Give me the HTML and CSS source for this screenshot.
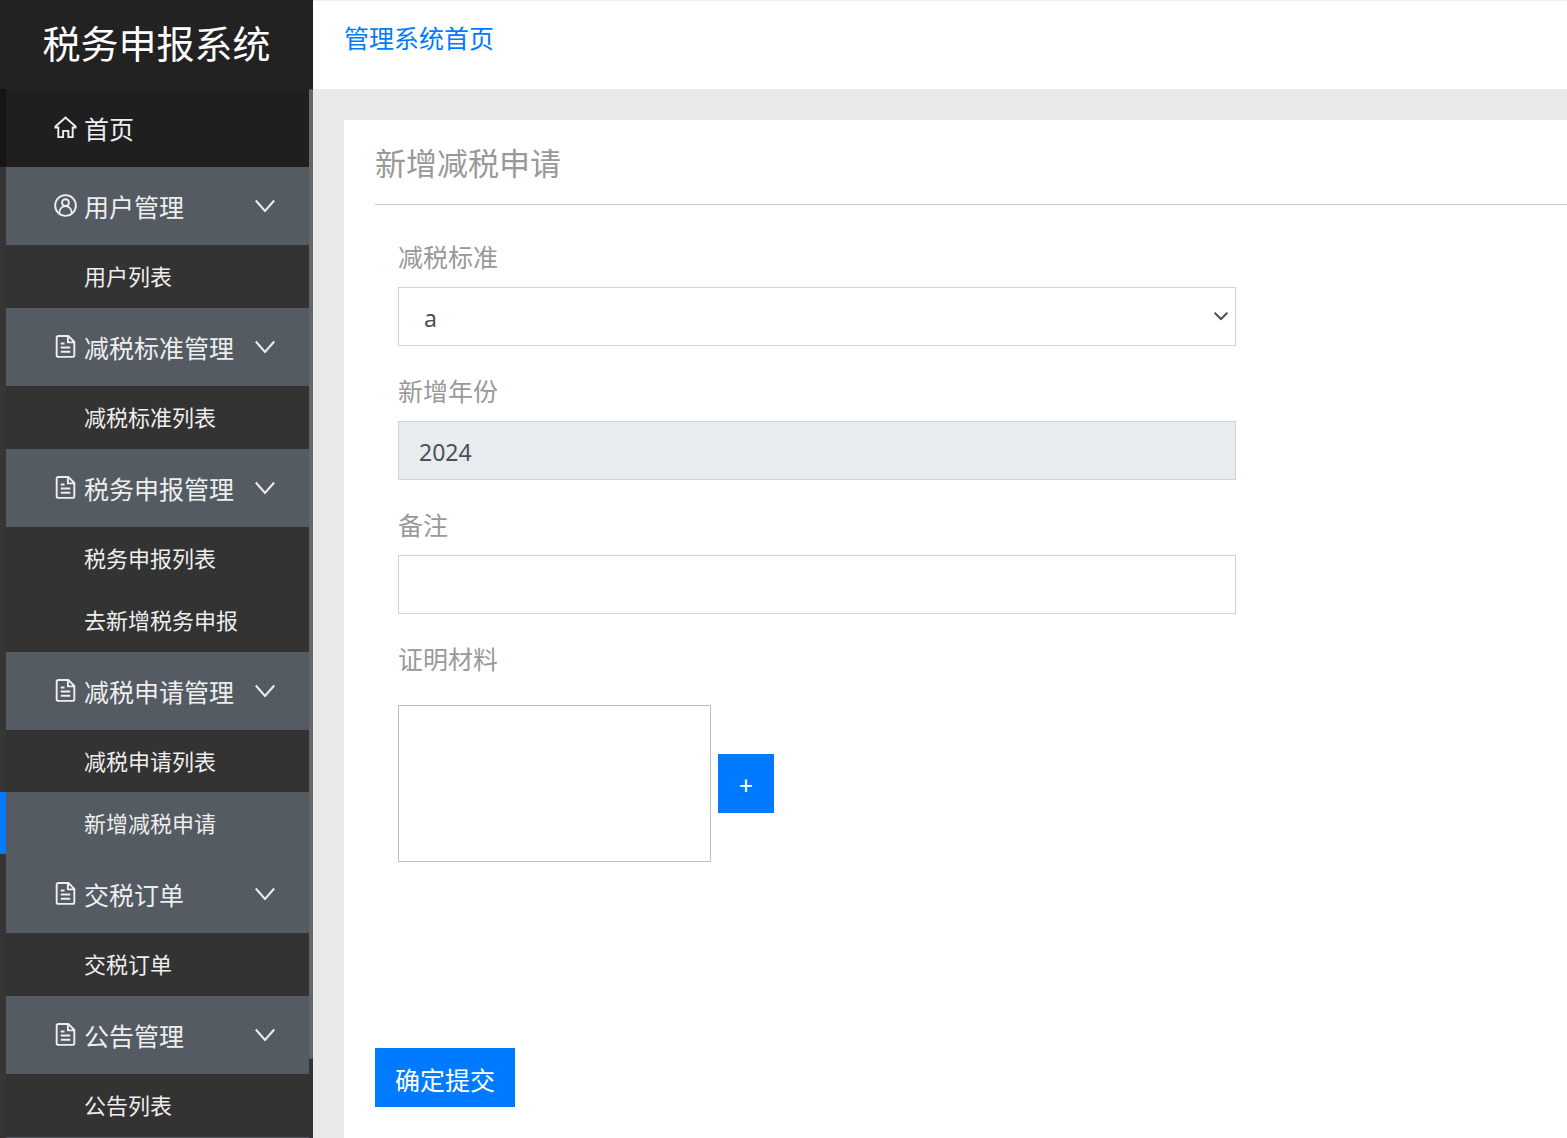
FILE: index.html
```html
<!DOCTYPE html>
<html lang="zh-CN">
<head>
<meta charset="utf-8">
<title>税务申报系统</title>
<link rel="stylesheet" href="styles.css">
</head>
<body>
<svg class="sprite" aria-hidden="true">
  <symbol id="i-home" viewBox="0 0 24 24"><path d="M4.500 12H1.500v-1L12 1.500 22.500 11v1h-3V22H15v-6.500H9.500V22H4.500z"/></symbol>
  <symbol id="i-user" viewBox="0 0 24 24"><circle cx="12" cy="12" r="10.800"/><circle cx="12" cy="9" r="3.600"/><path d="M5.500 20.500c0-4.500 2.500-7.900 6.500-7.900s6.500 3.400 6.500 7.900"/></symbol>
  <symbol id="i-file" viewBox="0 0 24 24"><path d="M4.500 1H15l6.200 6.200v13.800a1.800 1.800 0 0 1-1.800 1.800H4.500a1.700 1.700 0 0 1-1.700-1.700V2.700a1.700 1.700 0 0 1 1.700-1.700zM14.500 1v6.700H21M7 8.800h4M7 13h10M7 17.500h10"/></symbol>
  <symbol id="i-down" viewBox="0 0 20 14"><path d="M.8 1.500L10 12l9.200-10.500"/></symbol>
  <symbol id="i-caret" viewBox="0 0 16 10"><path d="M1.600 1.800L8 8l6.400-6.200"/></symbol>
</svg>
<div class="layout">
  <aside class="sidebar">
    <h1 class="logo">税务申报系统</h1>
    <nav class="menu">
      <ul class="menu-list">
        <li><a class="item home" href="#"><svg class="icon"><use href="#i-home"/></svg>首页</a></li>
        <li>
          <button class="item group" type="button"><svg class="icon"><use href="#i-user"/></svg>用户管理<svg class="arrow"><use href="#i-down"/></svg></button>
          <ul class="sub"><li><a class="sub-item" href="#">用户列表</a></li></ul>
        </li>
        <li>
          <button class="item group" type="button"><svg class="icon"><use href="#i-file"/></svg>减税标准管理<svg class="arrow"><use href="#i-down"/></svg></button>
          <ul class="sub"><li><a class="sub-item" href="#">减税标准列表</a></li></ul>
        </li>
        <li>
          <button class="item group" type="button"><svg class="icon"><use href="#i-file"/></svg>税务申报管理<svg class="arrow"><use href="#i-down"/></svg></button>
          <ul class="sub">
            <li><a class="sub-item" href="#">税务申报列表</a></li>
            <li><a class="sub-item" href="#">去新增税务申报</a></li>
          </ul>
        </li>
        <li>
          <button class="item group" type="button"><svg class="icon"><use href="#i-file"/></svg>减税申请管理<svg class="arrow"><use href="#i-down"/></svg></button>
          <ul class="sub">
            <li><a class="sub-item" href="#">减税申请列表</a></li>
            <li><a class="sub-item active" href="#">新增减税申请</a></li>
          </ul>
        </li>
        <li>
          <button class="item group" type="button"><svg class="icon"><use href="#i-file"/></svg>交税订单<svg class="arrow"><use href="#i-down"/></svg></button>
          <ul class="sub"><li><a class="sub-item" href="#">交税订单</a></li></ul>
        </li>
        <li>
          <button class="item group" type="button"><svg class="icon"><use href="#i-file"/></svg>公告管理<svg class="arrow"><use href="#i-down"/></svg></button>
          <ul class="sub"><li><a class="sub-item" href="#">公告列表</a></li></ul>
        </li>
        <li class="item group"></li>
      </ul>
      <span class="thumb"></span>
    </nav>
  </aside>
  <div class="content">
    <header class="topbar"><a class="top-link" href="#">管理系统首页</a></header>
    <main class="main">
      <form class="card">
        <h2 class="card-title">新增减税申请</h2>
        <div class="fields">
          <div class="field">
            <label class="label" for="standard">减税标准</label>
            <div class="select-wrap">
              <select class="control" id="standard"><option>a</option></select>
              <svg class="caret"><use href="#i-caret"/></svg>
            </div>
          </div>
          <div class="field">
            <label class="label" for="year">新增年份</label>
            <input class="control" id="year" type="text" value="2024" readonly>
          </div>
          <div class="field">
            <label class="label" for="remark">备注</label>
            <input class="control" id="remark" type="text">
          </div>
          <div class="field">
            <span class="label">证明材料</span>
            <div class="upload">
              <div class="preview"></div>
              <button class="btn" type="button">+</button>
            </div>
          </div>
        </div>
        <button class="btn submit" type="submit">确定提交</button>
      </form>
    </main>
  </div>
</div>
</body>
</html>
```
FILE: styles.css
```css
* { box-sizing: border-box; }
body {
  margin: 0;
  font-family: "Noto Sans", "Noto Sans CJK SC", sans-serif;
  font-size: 25px;
  color: #999;
  background: #e9e9e9;
}
ul { margin: 0; padding: 0; list-style: none; }
a { text-decoration: none; }
h1, h2 { margin: 0; font-weight: 400; }
button, input, select { font: inherit; border-radius: 0; }
.sprite { position: absolute; width: 0; height: 0; }
svg { fill: none; stroke: currentColor; stroke-width: 2; flex: none; }

.layout { display: flex; height: 100vh; overflow: hidden; }

/* Sidebar */
.sidebar {
  flex: none;
  width: 313px;
  display: flex;
  flex-direction: column;
  background: #333;
  color: #eee;
}
.logo {
  flex: none;
  height: 89px;
  line-height: 87px;
  font-size: 38px;
  text-align: center;
  color: #fff;
  background: #222;
}
.menu { position: relative; flex: 1; min-height: 0; overflow: hidden; }
.menu-list { padding-right: 4px; }
.thumb {
  position: absolute;
  top: 0;
  right: 0;
  width: 4px;
  height: calc(100% - 79px);
  border-radius: 2px;
  background: #666;
}
.item {
  display: flex;
  align-items: center;
  gap: 7px;
  width: 100%;
  height: 78px;
  padding: 0 34px 1px 48px;
  border: 0;
  border-left: 6px solid #363636;
  background: #545b63;
  color: #eee;
}
.home { border-left-color: #151515; background: #1f1f1f; }
.icon { width: 23px; height: 23px; }
.arrow { width: 20px; height: 14px; margin-left: auto; }
.sub { padding-bottom: 1px; }
.sub-item {
  display: block;
  height: 62px;
  padding-left: 78px;
  border-left: 6px solid #363636;
  line-height: 62px;
  font-size: 22px;
  color: #eee;
}
.sub li { background: #333; }
.sub .active { border-left-color: #007bff; background: #545b63; }
.sub:has(.active) { background: linear-gradient(to right, #363636 6px, #545b63 6px); }

/* Content */
.content { flex: 1; min-width: 0; display: flex; flex-direction: column; }
.topbar {
  flex: none;
  height: 89px;
  padding: 19px 31px;
  border-top: 1px solid #f0f0f0;
  background: #fff;
}
.top-link { display: block; line-height: 37px; color: #007bff; }
.main { flex: 1; min-height: 0; padding: 31px 0 0 31px; display: flex; }
.card { flex: 1; height: max-content; padding: 24px 0 62px 31px; background: #fff; }
.card-title {
  padding-bottom: 21px;
  border-bottom: 1px solid #ccc;
  line-height: 39px;
  font-size: 31px;
}
.fields { max-width: 884px; padding: 34px 23px 0; }
.field { margin-bottom: 27px; }
.label { display: block; margin-bottom: 11px; line-height: 37px; }
.control {
  display: block;
  width: 100%;
  height: 59px;
  padding: 2px 20px 0;
  border: 1px solid #ced4da;
  background: #fff;
  color: #495057;
  font-size: 23px;
}
.control:read-only:not(select) { background: #e9ecef; }
select.control { appearance: none; padding-left: 25px; }
.select-wrap { position: relative; color: #495057; }
.caret { position: absolute; top: 24px; right: 7px; width: 16px; height: 10px; }
.upload { display: flex; align-items: center; gap: 7px; padding-top: 16px; }
.preview { width: 313px; height: 157px; border: 1px solid #bfbfbf; }
.btn {
  height: 59px;
  min-width: 56px;
  padding: 2px 20px 0;
  border: 0;
  background: #007bff;
  color: #fff;
}
.submit { margin-top: 159px; }
```
